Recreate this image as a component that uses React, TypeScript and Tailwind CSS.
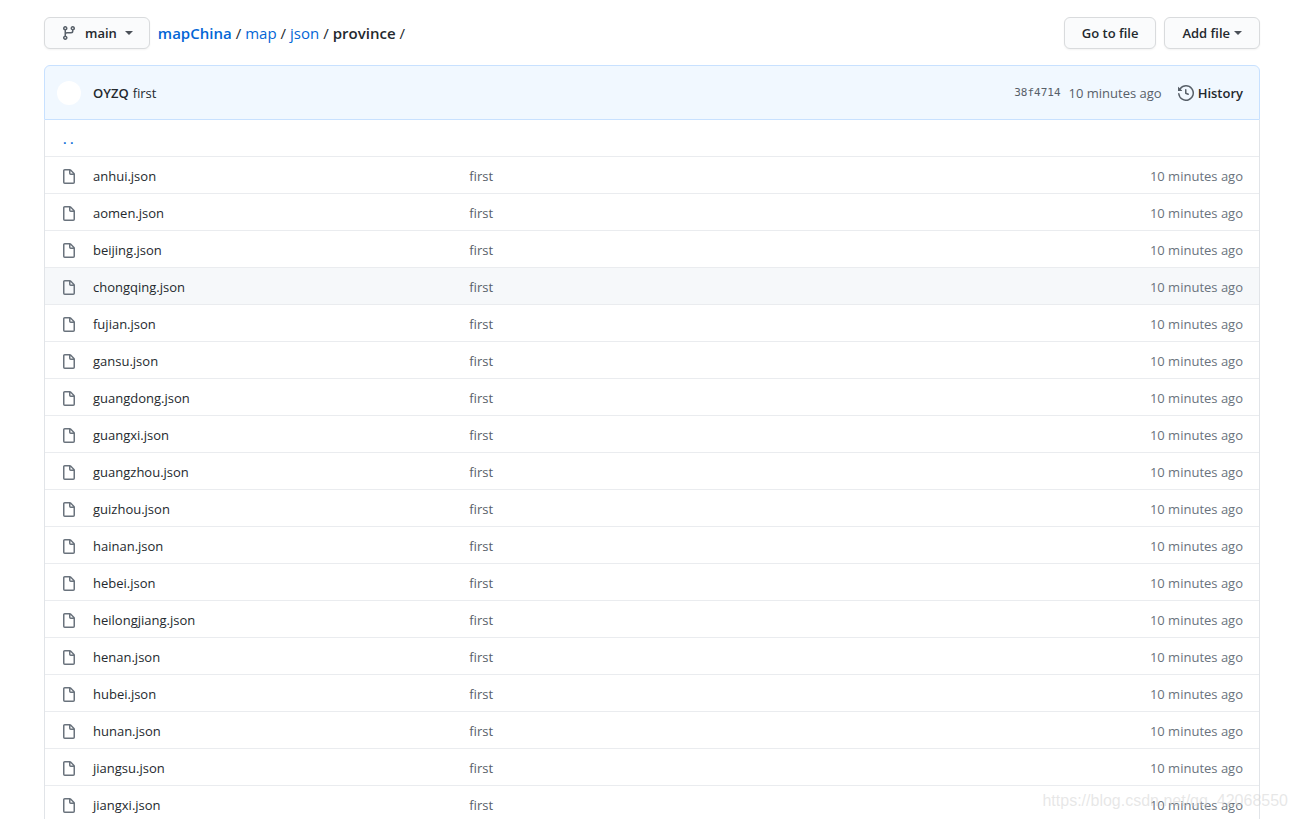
import { ReactNode } from "react";

interface FileEntry {
  name: string;
  message: string;
  age: string;
}

const FILES: FileEntry[] = [
  "anhui",
  "aomen",
  "beijing",
  "chongqing",
  "fujian",
  "gansu",
  "guangdong",
  "guangxi",
  "guangzhou",
  "guizhou",
  "hainan",
  "hebei",
  "heilongjiang",
  "henan",
  "hubei",
  "hunan",
  "jiangsu",
  "jiangxi",
].map((n) => ({ name: `${n}.json`, message: "first", age: "10 minutes ago" }));

const ICONS = {
  branch:
    "M11.75 2.5a.75.75 0 100 1.5.75.75 0 000-1.5zm-2.25.75a2.25 2.25 0 113 2.122V6A2.5 2.5 0 0110 8.5H6a1 1 0 00-1 1v1.128a2.251 2.251 0 11-1.5 0V5.372a2.25 2.25 0 111.5 0v1.836A2.492 2.492 0 016 7h4a1 1 0 001-1v-.628A2.25 2.25 0 019.5 3.25zM4.25 12a.75.75 0 100 1.5.75.75 0 000-1.5zM3.5 3.25a.75.75 0 111.5 0 .75.75 0 01-1.5 0z",
  file: "M3.75 1.5a.25.25 0 00-.25.25v11.5c0 .138.112.25.25.25h8.5a.25.25 0 00.25-.25V6H9.75A1.75 1.75 0 018 4.25V1.5H3.75zm5.75.56v2.19c0 .138.112.25.25.25h2.19L9.5 2.06zM2 1.75C2 .784 2.784 0 3.75 0h5.086c.464 0 .909.184 1.237.513l3.414 3.414c.329.328.513.773.513 1.237v8.086A1.75 1.75 0 0112.25 15h-8.5A1.75 1.75 0 012 13.25V1.75z",
  history:
    "M1.643 3.143L.427 1.927A.25.25 0 000 2.104V5.75c0 .138.112.25.25.25h3.646a.25.25 0 00.177-.427L2.715 4.215a6.5 6.5 0 11-1.18 4.458.75.75 0 10-1.493.154 8.001 8.001 0 101.6-5.684zM7.75 4a.75.75 0 01.75.75v2.992l2.028.812a.75.75 0 01-.557 1.392l-2.5-1A.75.75 0 017 8.25v-3.5A.75.75 0 017.75 4z",
};

function Octicon({ name, className = "" }: { name: keyof typeof ICONS; className?: string }) {
  return (
    <svg viewBox="0 0 16 16" aria-hidden="true" className={`h-4 w-4 shrink-0 fill-current ${className}`}>
      <path fillRule="evenodd" d={ICONS[name]} />
    </svg>
  );
}

function Caret() {
  return (
    <svg viewBox="0 0 8 4" aria-hidden="true" className="h-1 w-2 shrink-0 fill-[#4b5158]">
      <path d="M0 0h8L4 4z" />
    </svg>
  );
}

function Button({ children, className = "px-4" }: { children: ReactNode; className?: string }) {
  return (
    <button
      type="button"
      className={`flex h-8 items-center rounded-md border border-[#d9dbdd] bg-[#fafbfc] font-semibold shadow-xs hover:bg-[#f3f4f6] ${className}`}
    >
      {children}
    </button>
  );
}

export default function App() {
  return (
    <div className="relative h-screen overflow-hidden bg-white pt-[17px] pr-9 pl-11 font-['Open_Sans',sans-serif] text-[13px] leading-5 text-[#24292e]">
      <div className="mb-4 flex items-center gap-2">
        <Button>
          <Octicon name="branch" className="mr-2 text-[#586069]" />
          <span className="mr-2">main</span>
          <Caret />
        </Button>
        <nav aria-label="Breadcrumb" className="flex flex-1 gap-1 text-[15px] text-[#24292e]">
          <a href="#mapChina" className="font-semibold text-[#0366d6]">mapChina</a>
          <span>/</span>
          <a href="#map" className="text-[#0366d6]">map</a>
          <span>/</span>
          <a href="#json" className="text-[#0366d6]">json</a>
          <span>/</span>
          <span className="font-semibold">province</span>
          <span>/</span>
        </nav>
        <Button className="px-[17px]">Go to file</Button>
        <Button className="px-[17px]">
          <span className="mr-1">Add file</span>
          <Caret />
        </Button>
      </div>

      <div className="flex h-[55px] items-center rounded-t-md border border-[#c8e1ff] bg-[#f1f8ff] pr-4 pl-3">
        <span className="mr-3 h-6 w-6 rounded-full bg-white" />
        <a href="#OYZQ" className="mr-1 font-semibold">OYZQ</a>
        <a href="#commit">first</a>
        <div className="ml-auto flex items-center text-[#586069]">
          <a href="#38f4714" className="mr-2 font-['DejaVu_Sans_Mono',monospace] text-[11px]">38f4714</a>
          <span className="mr-4">10 minutes ago</span>
          <a href="#history" className="flex items-center gap-1 font-semibold text-[#24292e]">
            <Octicon name="history" className="text-[#586069]" />
            History
          </a>
        </div>
      </div>

      <table className="w-full table-fixed border-separate border-spacing-0 border-x border-[#e1e4e8]">
        <colgroup>
          <col className="w-12" />
          <col className="w-[31%]" />
          <col />
          <col className="w-36" />
        </colgroup>
        <tbody>
          <tr className="h-9">
            <td colSpan={4} className="pt-0.5 pl-[18px]">
              <a href="#parent" aria-label="Parent directory" className="font-semibold text-[#0366d6]">
                . .
              </a>
            </td>
          </tr>
          {FILES.map((file) => (
            <tr
              key={file.name}
              className={`h-[37px] hover:bg-[#f6f8fa] ${file.name === "chongqing.json" ? "bg-[#f6f8fa]" : ""}`}
            >
              <td className="border-t border-[#eaecef] pt-1 pl-4">
                <Octicon name="file" className="text-[#6a737d]" />
              </td>
              <td className="border-t border-[#eaecef] pt-0.5">
                <a href={`#${file.name}`}>{file.name}</a>
              </td>
              <td className="border-t border-[#eaecef] pt-0.5 text-[#586069]">
                <a href="#commit">{file.message}</a>
              </td>
              <td className="border-t border-[#eaecef] pt-0.5 pr-4 text-right text-[#6a737d]">{file.age}</td>
            </tr>
          ))}
        </tbody>
      </table>

      <span className="pointer-events-none absolute right-2 bottom-2 font-['Liberation_Sans',sans-serif] text-base leading-5 text-[#d0d0d0]/50">
        https://blog.csdn.net/qq_42068550
      </span>
    </div>
  );
}
